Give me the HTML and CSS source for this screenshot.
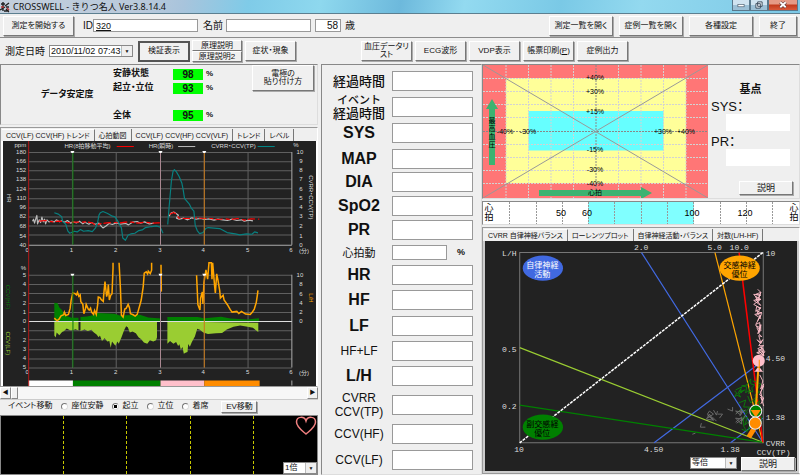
FILE: index.html
```html
<!DOCTYPE html>
<html lang="ja">
<head>
<meta charset="utf-8">
<title>CROSSWELL - きりつ名人 Ver3.8.14.4</title>
<link rel="stylesheet" href="styles.css">
</head>
<body>
<header class="titlebar">
  <svg class="app-icon" viewBox="0 0 10 12" aria-hidden="true"><path d="M1 3h4M3 1v9M0 9l5-3M5 5l4-3M6 6h3M4 10h5M6 8l3 3" stroke="#222" stroke-width="1.4" fill="none"/><path d="M1 6h3M7 7l2 2" stroke="#b33" stroke-width="1.4"/></svg>
  <h1 class="title">CROSSWELL - きりつ名人 Ver3.8.14.4</h1>
  <div class="window-buttons">
    <button class="wb" aria-label="最小化"><svg viewBox="0 0 18 11"><rect x="5.500" y="5" width="7" height="2.500" fill="#fff" stroke="#456" stroke-width=".7"/></svg></button>
    <button class="wb" aria-label="元に戻す"><svg viewBox="0 0 18 11"><path d="M7.500 2h5v5h-5zM5.500 4h5v5h-5z" fill="#eef4fa" stroke="#345" stroke-width="1"/></svg></button>
    <button class="wb close" aria-label="閉じる"><svg viewBox="0 0 28 11"><path d="M11 2.500l6 5.500M17 2.500l-6 5.500" stroke="#533" stroke-width="3.400"/><path d="M11 2.500l6 5.500M17 2.500l-6 5.500" stroke="#fff" stroke-width="2"/></svg></button>
  </div>
</header>

<div class="bar patient">
  <button class="btn wide">測定を開始する</button>
  <label class="lbl id-label" for="pid">ID</label><input class="field id-field" id="pid" value="320">
  <label class="lbl name-label" for="pname">名前</label><input class="field name-field" id="pname">
  <input class="field age-field" id="age" value="58"><label class="lbl age-label" for="age">歳</label>
  <div class="bar-right">
    <button class="btn">測定一覧を開く</button>
    <button class="btn">症例一覧を開く</button>
    <button class="btn">各種設定</button>
    <button class="btn exit">終了</button>
  </div>
</div>

<div class="bar tools">
  <label class="lbl date-label" for="date">測定日時</label>
  <span class="combo date-combo"><select id="date"><option>2010/11/02 07:43</option></select></span>
  <button class="btn tool default">検証表示</button>
  <div class="stack"><button class="btn">原理説明</button><button class="btn">原理説明2</button></div>
  <button class="btn tool">症状・現象</button>
  <div class="tool-group">
    <button class="btn tool">血圧データリスト</button>
    <button class="btn tool">ECG波形</button>
    <button class="btn tool">VDP表示</button>
    <button class="btn tool">帳票印刷(<u>P</u>)</button>
    <button class="btn tool">症例出力</button>
  </div>
</div>

<main class="main">
  <section class="left">
    <div class="panel stability">
      <h2 class="stability-title">データ安定度</h2>
      <dl class="scores">
        <dt>安静状態</dt><dd><b>98</b>%</dd>
        <dt>起立・立位</dt><dd><b>93</b>%</dd>
        <dt class="total">全体</dt><dd class="total"><b>95</b>%</dd>
      </dl>
      <button class="btn attach">電極の<br>貼り付け方</button>
    </div>

    <div class="tabbed">
      <nav class="tabs">
        <button class="tab on">CCV(LF) CCV(HF) トレンド</button><button class="tab">心拍動図</button><button class="tab">CCV(LF) CCV(HF) CCV(VLF)</button><button class="tab">トレンド</button><button class="tab">レベル</button>
      </nav>
      <div class="sheet">
        <svg class="chart" viewBox="4 142 311 243" role="img" aria-label="トレンド">
          <rect x="4" y="142" width="311" height="244" fill="#222"/>
          <path d="M29 153.500H291M29 162.500H291M29 171.500H291M29 180.500H291M29 189.500H291M29 199.500H291M29 208.500H291M29 217.500H291M29 226.500H291M29 235.500H291M73 153V245M116.500 153V245M160.500 153V245M204 153V245M247.500 153V245" class="grid"/>
          <path d="M29 275.500H291M29 284.500H291M29 293.500H291M29 303.500H291M29 312.500H291M29 330.500H291M29 339.500H291M29 349.500H291M29 358.500H291M29 367.500H291M73 275V367M116.500 275V367M160.500 275V367M204 275V367M247.500 275V367" class="grid"/>
          <path d="M29 245.500H291M291 153V245M291 275V367M291 380V385" stroke="#aaa" fill="none"/>
          <g class="ax">
            <text x="27" y="148">ppm</text>
            <text x="27" y="155">180</text><text x="27" y="164">166</text><text x="27" y="173">152</text><text x="27" y="182">138</text><text x="27" y="192">124</text><text x="27" y="201">110</text><text x="27" y="210">96</text><text x="27" y="219">82</text><text x="27" y="228">68</text><text x="27" y="238">54</text><text x="27" y="247">40</text>
            <text x="27" y="270">%</text>
            <text x="27" y="277">5</text><text x="27" y="286">4</text><text x="27" y="296">3</text><text x="27" y="305">2</text><text x="27" y="314">1</text><text x="27" y="323">0</text><text x="27" y="332">1</text><text x="27" y="342">2</text><text x="27" y="351">3</text><text x="27" y="360">4</text><text x="27" y="369">5</text>
          </g>
          <g class="ax mid">
            <text x="295" y="148">%</text>
            <text x="299" y="155">10</text><text x="300" y="164">9</text><text x="300" y="173">8</text><text x="300" y="182">7</text><text x="300" y="192">6</text><text x="300" y="201">5</text><text x="300" y="210">4</text><text x="300" y="219">3</text><text x="300" y="228">2</text><text x="300" y="238">1</text><text x="300" y="247">0</text>
            <text x="299" y="277">10</text><text x="300" y="286">8</text><text x="300" y="296">6</text><text x="300" y="305">4</text><text x="300" y="314">2</text><text x="300" y="323">0</text>
            <text x="28" y="252">0</text><text x="72" y="252">1</text><text x="116" y="252">2</text><text x="160" y="252">3</text><text x="203" y="252">4</text><text x="247" y="252">5</text><text x="290" y="252">6</text><text x="303" y="253">(分)</text>
            <text x="28" y="374">0</text><text x="72" y="374">1</text><text x="116" y="374">2</text><text x="160" y="374">3</text><text x="203" y="374">4</text><text x="247" y="374">5</text><text x="290" y="374">6</text><text x="303" y="375">(分)</text>
            <text transform="translate(8 199) rotate(90)">HR</text>
            <text transform="translate(308 198) rotate(90)">CVRR・CCV(TP)</text>
            <text transform="translate(7 297) rotate(90)" fill="#087808">CCV(HF)</text>
            <text transform="translate(7 343) rotate(90)" fill="#9acd32">CCV(LF)</text>
            <text transform="translate(308 298) rotate(90)" fill="#ffa500">L/H</text>
            <text x="88" y="149">HR(8拍移動平均)</text><text x="161" y="149">HR(瞬時)</text><text x="233" y="149">CVRR・CCV(TP)</text>
          </g>
          <path d="M117 147.500H134" stroke="red"/><path d="M178 147.500H195" stroke="#bbb"/><path d="M257 147.500H274" stroke="#088"/>
          <path d="M29 380H73.500V385.500H29Z" fill="#fff"/><path d="M73.500 380H160.500V385.500H73.500Z" fill="green"/><path d="M160.500 380H204V385.500H160.500Z" fill="pink"/><path d="M204 380H259V385.500H204Z" fill="darkorange"/>
          <g transform="translate(0 125) scale(.33333)" fill="none" stroke-width="3.500" stroke-linejoin="round">
            <path stroke="#bbb" d="M100 290l3-6 3 12 4-14 3-9 2 25 5-12 4 8 4-16 4 14 4-8 3 14 4-12 6 6 8-2 8 2 6-6 10 6 6-3 9 4 8-5 10 8 6-4 12 3 8-5 10 8 6-5 12 6 8-5 10 5 12-3 8 10 4 4 8-5 10-8 10 3 12-5 12 4 16-2 8 4 12-8 14-2 10 5 12-4 14 6 14-2M507 275l6-9 8-3 8 5 6 4-6 9 8 3 14-3 10 5 14-6 12 4 14-2 12 3 14-2 14 4 12-3 14 2 14 2 14-4 14 4 14-2 8 4 14-3 12 2"/>
            <path stroke="red" stroke-dasharray="22 9 12 6" d="M120 290l20-2 20 4 16-2 14 1 16 4 14-2 20 0 20-1 18 3 10 7 14-4 20-3 20-1 20 1 14-2 20 0 20 3 20-3 22 3 16-1 15 0M508 270l12-6 8 4 8 13 14 1 22 0 20-2 20 2 20 0 20 3 20-2 20 2 20-3 20 5 20-4 24 1"/>
            <path stroke="#088080" d="M165 265l12 4 10 8 3 14 9 8 6 20 6 7 14-6 8 2 10-7 9 5 14-2 12 3 10-11 6-16 4-22 4-7 8-4 14 6 14 8 8 2 10 16 9 17 4 30 8 7 8-16 8-3 12-2 12-8 10-2 10-7 18-3 14-2 12 4 8 18M503 300l4-50 7-80 5-29 4-5 6 7 8 14 8 19 4 20 4 26 15 18 6 12 7 8 4 42 6 16 7 9 10-3 8-12 8-3 34 3 22 12 24 4 14 3 20-3 16 1 8-7 10 3"/>
          </g>
          <g transform="translate(0 255) scale(.33333)">
            <path fill="green" d="M165 199V143l10 2 5 12 8 8 7 15 10 4 12 4h20v11ZM243 199v-13l20-2 20-4 10-6 52 2 15 5 60-2 25 8 38 3v9ZM502 199v-13l90 0 20 3 50-4 28 5 50 3 35-4v10Z"/>
            <path fill="#9acd32" d="M165 199v42l4 6 3-15 8 8 8-10 6-3 8-7 10 5 8 0 8-3 9 4v-27ZM243 199v28l12-4 10 4 10-3 8 8 8 6 6 8 4-5 6 16 8-8 8 10 6-2 4 20 4-18 10 12 6-12 4 6 8-18 8-22 6-12 5 3 6 16 8-3 10 5 8 12 8 6 8 10 10 3 8-10 10 4 8-4 3-8V199ZM502 199v66l8-8 10 8 8-5 6 12 4-5 4 16 5-8 4 20 5-3 6-2 2-24 5 8 6-14 9-16 7-23 8 3 10 8 14 4 24-2 18-1 14-10 20-8 20-4 22 4 16 3 16 12v-27Z"/>
            <path d="M88 199H873" stroke="#ddd" stroke-width="3"/>
            <path fill="none" stroke="orange" stroke-width="4.500" d="M165 189l8 8 6-5 6-10 8-3 2-8 4 10 8-3 5-18 3-24 5-22 7 2 4 4 3-8 4 12 4-4 2 20 6 8 3 28 5-16 2-12 6 14 3 3 4-6 3 12 6 7 3-12 5 12 4-28 2-24 5 2 4 6 6 5 1-17 4-42 5 45 3-12 2-24 3 46 4-14 4-5 3-76V24M358 24l4 76 3 80 5 6 5-24 4-2 6-12 4 10 3 18 8 3 6 4 6-5 8-28 4-15 6-40 3-40 6-4 4 6 2-8 6 7 4-10V24M483 30l1 80M589 61l4 88 6 16 2-36 5-18 2 36 3-64 6-38 5 28 4-49 7 0 2 49 2-49 6 72 2 18 4-57 4 20 5 30 2 22 8-8 3 14 10 14 8 14 6 8 14-2 6 6 8-6 12 8 14 1 7-8 5-8 6-20 3-20 2-16"/>
          </g>
          <path d="M29.500 142V386" stroke="#b01818"/>
          <path d="M73.500 153V245M73.500 275V367" stroke="#0a7a0a"/><path d="M160.500 153V245M160.500 275V367" stroke="#a98790"/><path d="M204 153V245M204 275V367" stroke="#c87818"/>
          <path d="M71 152h4l-1 2h-2zM158.500 152h4l-1 2h-2zM202 152h4l-1 2h-2zM71 274h4l-1 2h-2zM158.500 274h4l-1 2h-2zM202 274h4l-1 2h-2z" fill="#fff"/>
        </svg>
      </div>
    </div>

    <div class="scroll"><button class="arrow" aria-label="左へ">◀</button><button class="thumb" aria-label="つまみ"></button><button class="arrow end" aria-label="右へ">▶</button></div>

    <form class="events">
      <span>イベント移動</span>
      <label><input type="radio" name="ev">座位安静</label>
      <label><input type="radio" name="ev" checked>起立</label>
      <label><input type="radio" name="ev">立位</label>
      <label><input type="radio" name="ev">着席</label>
      <button type="button" class="btn ev">EV移動</button>
    </form>

    <div class="ecg">
      <i></i><i></i><i></i><i></i>
      <div class="ecg-side">
        <svg class="heart" viewBox="0 0 22 20" aria-hidden="true"><path d="M11 18C7 14.500 1.500 11 1.500 6C1.500 0 9.500 0 11 5C12.500 0 20.500 0 20.500 6C20.500 11 15 14.500 11 18Z" fill="none" stroke="#f08080" stroke-width="1.500"/></svg>
        <span class="combo zoom-combo"><select aria-label="倍率"><option>1倍</option></select></span>
      </div>
    </div>
  </section>

  <section class="panel readings">
    <label for="r1" class="jp">経過時間</label><input id="r1">
    <label for="r2" class="jp"><span>イベント</span>経過時間</label><input id="r2">
    <label for="r3">SYS</label><input id="r3">
    <label for="r4">MAP</label><input id="r4">
    <label for="r5">DIA</label><input id="r5">
    <label for="r6">SpO2</label><input id="r6">
    <label for="r7">PR</label><input id="r7">
    <label for="r8" class="beat">心拍動</label><div class="pct"><input id="r8"><b>%</b></div>
    <label for="r9">HR</label><input id="r9">
    <label for="r10">HF</label><input id="r10">
    <label for="r11">LF</label><input id="r11">
    <label for="r12" class="thin">HF+LF</label><input id="r12">
    <label for="r13">L/H</label><input id="r13">
    <label for="r14" class="thin">CVRR<br>CCV(TP)</label><input id="r14">
    <label for="r15" class="thin">CCV(HF)</label><input id="r15">
    <label for="r16" class="thin">CCV(LF)</label><input id="r16">
  </section>

  <section class="right">
    <div class="panel map">
      <svg class="zone" viewBox="483 65 225 133" role="img" aria-label="最高血圧と心拍">
        <rect x="483" y="65" width="225" height="133" fill="#ff7676"/>
        <rect x="506" y="78" width="180" height="105" fill="#ffff99"/>
        <rect x="528.500" y="111" width="135" height="39.500" fill="#66ffff"/>
        <path d="M506 65V198M528.500 65V198M551 65V198M573.500 65V198M618.500 65V198M641 65V198M663.500 65V198M686 65V198M483 78.500H708M483 91.500H708M483 104.500H708M483 117.500H708M483 144.500H708M483 157.500H708M483 170.500H708M483 183.500H708" stroke="#d3d3d3" stroke-dasharray="2 1" fill="none"/>
        <path d="M596 65V198M483 131.500H708" stroke="#888" stroke-dasharray="2 1"/>
        <path d="M483 65L708 198M708 65L483 198" stroke="#999"/>
        <path d="M489 165V109H486L492 99L498 109H495V165ZM539 190H641V187L652 193L641 199V196H539Z" fill="#3cb371"/>
        <g class="zt"><text x="595" y="80">+40%</text><text x="595" y="94">+30%</text><text x="595" y="114">+15%</text><text x="595" y="152">-15%</text><text x="595" y="172">-30%</text><text x="595" y="186">-40%</text><text x="505" y="134">-40%</text><text x="528" y="134">-30%</text><text x="663" y="134">+30%</text><text x="686" y="134">+40%</text><text x="595" y="195">心拍</text>
        <text x="492" y="123">最</text><text x="492" y="131">高</text><text x="492" y="139">血</text><text x="492" y="147">圧</text></g>
      </svg>
      <div class="base">
        <h2>基点</h2>
        <label for="bs">SYS：</label><input id="bs">
        <label for="bp">PR：</label><input id="bp">
        <button class="btn explain">説明</button>
      </div>
    </div>

    <div class="panel strip">
      <svg viewBox="483 202 316 22" role="img" aria-label="心拍">
        <rect x="483" y="202" width="316" height="22" fill="#fff"/><rect x="588" y="202" width="106" height="22" fill="#80ffff"/>
        <path d="M509.500 202V224M536.500 202V224M562.500 202V224M588.500 202V224M614.500 202V224M641.500 202V224M667.500 202V224M693.500 202V224M720.500 202V224M746.500 202V224M772.500 202V224" stroke="#999" stroke-dasharray="2 1"/>
        <g class="st"><text x="561" y="216">50</text><text x="587" y="216">60</text><text x="692" y="216">100</text><text x="745" y="216">120</text><text x="489" y="211">心</text><text x="489" y="220">拍</text><text x="794" y="211">心</text><text x="794" y="220">拍</text></g>
      </svg>
    </div>

    <div class="tabbed">
      <nav class="tabs">
        <button class="tab on">CVRR 自律神経バランス</button><button class="tab">ローレンツプロット</button><button class="tab">自律神経活動・バランス</button><button class="tab">対数(L/H-HF)</button>
      </nav>
      <div class="sheet dark">
        <svg class="chart" viewBox="486 241 310 215" role="img" aria-label="自律神経バランス">
          <rect x="486" y="241" width="310" height="215" fill="#222"/>
          <path d="M520.500 252.500H762.500V441.500H520.500Z" fill="none" stroke="#777"/>
          <g fill="none" stroke-width="1.200">
            <path d="M641.500 252.500L762 441M654 441.500L762 360M730 441.500L762 417" stroke="#4169e1"/>
            <path d="M520.500 347L762 441" stroke="#9acd32"/><path d="M520.500 404L762 441" stroke="green"/>
            <path d="M714.500 252.500L762 441" stroke="orange"/><path d="M738.500 252.500L762 441" stroke="red" stroke-width="1.500"/>
            <path d="M762 252.500L520.500 441.500" stroke="#fff" stroke-dasharray="3 1" stroke-width="1.500"/>
          </g>
          <g fill="none" stroke-width=".9">
            <path stroke="pink" d="M757 289l3 3-5 2 5 1-7-1 4 5 3-7-3 10-2-6 5 3-7 1 4 3 3 2-5-6 5 0-7 5 7 4-4-2-1 5 5-4-4 7 5-2-7 2 6 4-4-8 5 3-4 7 3-5-5 9 4-2 0 5-4-2 5 5 0-6-3 9 3-3M756 327l2 4 2-6-2 8 3 3-3-1 2 7-4-3M757 340l3 3 2-4-4 6 5 0-6 3 5 3-6 1 7 3-3-9 4 5-5 7M757 351l5-4 1 8-5-5 4 4M759 374l3 6-2 8 3-5-4 11 4 3-3 6M763 385l-3 6 2 9-2-4 3 9"/>
            <path stroke="#0a7f0a" d="M746 384l4-6 0 5 4 1-3 3 1 4-5-1-2 2 1-6-5-1 6-1M735 389l6-3-2 5 5-2-6 4 2 3-4-2-2 2 2-4-2-2M737 393l3-5 1 4M749 386l-1 7M752 380l8 3-4 6 3 2-5 3 3 4-4 2 5 3M738 402l7-3-2 7 6 0-4 5-4-3-5 4M747 395l3 7 6-7-2 8 5-3M747 411l-6 7 6-2-3 8 6-5-2 10M739 423l4-5 0 7 3 5-5-2M758 400l2 8-3 6 4 2-2 9M746 431l4-8"/>
            <path stroke="#707070" d="M700 426l5 0M701 422l-1 4M692 433l3-1M707 417l6-4-4-3-2 3 6 6-7-1 3-5 4 6-6-5M713 409l3 5 1-4M717 413l5 0-3 4M712 416l4 4M727 408l5 2 0-4M735 413l6-5-1 6-5-4 7 1-3 4M735 421l6-5 0 7-6-6 7 1-6 4M739 412l6-3M741 420l4-6"/>
          </g>
          <path d="M758 360L755 410" stroke="orange" stroke-width="2"/>
          <circle cx="758" cy="360" r="6" fill="pink"/><path d="M753 371c3-1 2-4 5-4s2 3 5 4z" fill="pink"/><path d="M758.500 359V370" stroke="darkorange"/>
          <circle cx="755" cy="410" r="6" fill="green" stroke="#eee"/><path d="M750 409h10l-4 6h-2z" fill="darkorange"/>
          <path d="M753 428L748 436" stroke="darkorange" stroke-width="5"/><circle cx="754.500" cy="422" r="6" fill="darkorange" stroke="#eee"/>
          <ellipse cx="543.500" cy="268" rx="20" ry="12.500" fill="#4169e1"/><ellipse cx="739" cy="268" rx="20" ry="12.500" fill="orange"/><ellipse cx="543.500" cy="426" rx="20" ry="12.500" fill="green"/>
          <g class="bt"><text x="543" y="268" fill="#fff">自律神経</text><text x="543" y="277" fill="#fff">活動</text><text x="739" y="268" fill="#000">交感神経</text><text x="739" y="277" fill="#000">優位</text><text x="543" y="426" fill="#000">副交感経</text><text x="543" y="435" fill="#000">優位</text></g>
          <g class="bn"><text x="503" y="256">L/H</text><text x="634" y="250">2.0</text><text x="707" y="250">5.0</text><text x="729" y="250">10.0</text><text x="765" y="256">10</text><text x="503" y="351">0.5</text><text x="503" y="408">0.2</text><text x="515" y="451">10</text><text x="644" y="451">4.50</text><text x="720" y="451">1.38</text><text x="765" y="360">4.50</text><text x="765" y="419">1.38</text><text x="765" y="445">CVRR</text><text x="756" y="454">CCV(TP)</text></g>
        </svg>
        <div class="sheet-foot">
          <span class="combo scale-combo"><select aria-label="表示倍率"><option>等倍</option></select></span>
          <button class="btn explain">説明</button>
        </div>
      </div>
    </div>
  </section>
</main>
</body>
</html>
```
FILE: styles.css
```css
* { box-sizing: border-box; }

body {
  margin: 0;
  min-height: 100vh;
  display: flex;
  flex-direction: column;
  background: #efefef;
  color: #111;
  font: 8px/1.1 "Liberation Sans", "Noto Sans CJK JP", sans-serif;
  font-feature-settings: "palt";
}

h1, h2, dl, dd { margin: 0; font-size: inherit; }
button, input, select { font: inherit; color: inherit; font-feature-settings: inherit; margin: 0; }
input { min-width: 0; }
svg { display: block; }

/* title bar */
.titlebar {
  display: flex;
  align-items: center;
  height: 14px;
  padding-right: 2px;
  border-bottom: 1px solid #5c7f90;
  background: linear-gradient(100deg, #c3cfdc 0%, #b9c9db 18%, #a8c4dc 23%, #7fcbe8 31%, #8ed8ee 40%, #6db9dc 50%, #93daf0 58%, #7ac9e6 70%, #93d9ef 80%, #7cc8e6 100%);
}
.app-icon { width: 10px; height: 12px; }
.title { margin-left: 3px; font: 9px/13px "Noto Sans", "Noto Sans CJK JP", sans-serif; }
.window-buttons { display: flex; align-self: flex-start; margin-left: auto; }
.wb {
  width: 18px; height: 11px; padding: 0;
  border: 1px solid #59788c; border-top: 0;
  background: linear-gradient(#cfe3f0 45%, #9cc0d6 50%);
}
.wb.close { width: 30px; background: linear-gradient(#e59a86 40%, #c23a1c 50%, #d8593a); }
.wb svg { width: 100%; height: 10px; }

/* toolbars */
.bar { display: flex; align-items: center; height: 24px; padding: 0 3px; border-bottom: 1px solid #8c8c8c; }
.tools { height: 26px; border-bottom: 0; }
.btn {
  width: 64px; height: 20px; padding: 0; line-height: 8px; font-weight: normal;
  border: 1px solid; border-color: #fff #777 #777 #fff;
  box-shadow: 1px 1px 0 #aaa;
  background: #f0f0f0;
}
.wide { width: 71px; }
.exit { width: 38px; }
.lbl { font-size: 10px; white-space: nowrap; }
.field { height: 13px; padding: 0 2px; border: 1px solid #999; background: #fff; font-size: 9px; }
.id-label { margin-left: 9px; }
.id-field { width: 105px; text-decoration: underline; }
.name-label { margin: 0 3px 0 5px; }
.name-field { width: 85px; }
.age-field { width: 26px; margin: 0 4px; text-align: right; font-size: 10px; }
.bar-right { display: flex; gap: 6px; margin-left: auto; }

.date-label { margin: 0 4px 0 2px; }
.combo { position: relative; display: inline-flex; background: #fff; border: 1px solid #888; height: 12px; }
.combo select { width: 100%; padding: 0 1px; border: 0; background: none; appearance: none; font-size: 8px; line-height: 10px; }
.combo::after {
  content: "▼"; position: absolute; right: 0; top: 0; bottom: 0; width: 10px;
  background: #eee; border-left: 1px solid #bbb; font-size: 5px; line-height: 10px; text-align: center;
  pointer-events: none;
}
.date-combo { width: 84px; margin-right: 6px; }
.date-combo select { font-size: 9px; }
.tool { width: 51px; margin-right: 3px; }
.default { border-color: #555; box-shadow: 0 0 0 1px #555; width: 50px; height: 19px; }
.stack { margin-right: 3px; }
.stack .btn { display: block; width: 50px; height: 11px; }
.tool-group { display: flex; margin-left: 62px; }

/* three columns */
.main {
  flex: 1;
  display: grid;
  grid-template-columns: minmax(0, 319fr) minmax(0, 163fr) minmax(0, 318fr);
}
.panel { border: 1px solid; border-color: #888 #ddd #ddd #888; }
.left { display: flex; flex-direction: column; padding-right: 1px; }

.stability { display: flex; height: 61px; padding-left: 40px; font-weight: bold; }
.stability-title { align-self: center; width: 72px; font-size: 9px; }
.scores { display: grid; grid-template-columns: 60px 1fr; grid-template-rows: 14px 14px 28px; align-items: center; font-size: 9px; padding-top: 2px; }
.scores dd { display: flex; align-items: center; font-size: 8px; }
.scores b { width: 30px; height: 11px; margin-right: 3px; background: #0f0; font-size: 10px; line-height: 11px; text-align: center; }
.scores .total { align-self: end; padding-bottom: 2px; }
.attach { margin-left: auto; margin-right: 3px; width: 62px; height: 26px; }

/* tabs */
.tabbed { margin-top: 2px; border: 1px solid; border-color: #999 #fff #999 #999; }
.tabs { display: flex; height: 13px; padding-left: 1px; }
.tab {
  height: 12px; margin-top: 1px; padding: 0 4px; white-space: nowrap;
  border: 0; border-right: 1px solid #777; background: none; font-size: 7px; line-height: 11px;
}
.tab.on { border-top: 1px solid #fff; }
.sheet { padding: 0 1px 0 2px; background: #fff; }
.chart { width: 100%; height: auto; }
svg text { font-family: "Liberation Sans", "Noto Sans CJK JP", sans-serif; }
.grid { fill: none; stroke: #606060; }
.ax { font-size: 6px; fill: #ddd; text-anchor: end; }
.mid { text-anchor: middle; }

.scroll { display: flex; height: 13px; background: #f7f7f7; border-bottom: 1px solid #ccc; }
.scroll button { padding: 0; border: 1px solid; border-color: #fff #888 #888 #fff; background: #f0f0f0; }
.arrow { width: 11px; font-size: 6px; }
.thumb { width: 7px; }
.end { margin-left: auto; }

.events { display: flex; align-items: center; height: 14px; padding-left: 8px; gap: 9px; }
.events label { display: flex; align-items: center; gap: 3px; }
.events input {
  appearance: none; width: 7px; height: 7px; border-radius: 50%;
  border: 1px solid; border-color: #777 #ddd #ddd #777; background: #fff;
}
.events input:checked { background: radial-gradient(#000 40%, #fff 50%); }
.ev { width: 36px; height: 12px; margin-left: 4px; }

.ecg { flex: 1; display: grid; grid-template-columns: repeat(5, 1fr); margin-top: 1px; background: #000; border: 1px solid #888; }
.ecg > i { border-right: 1px dashed #c8c800; }
.ecg-side { display: flex; flex-direction: column; justify-content: space-between; align-items: flex-end; }
.heart { width: 22px; height: 20px; }
.zoom-combo { width: 34px; }

/* readings */
.readings {
  display: grid;
  margin: 0 0 0 2px;
  grid-template-columns: 1fr 81px;
  grid-template-rows: 26px 25px 28px 23px 24px 24px 24px 21px 24px 26px 26px 24px 25px 33px 26px 26px;
  align-items: center;
  padding: 3px 8px 0 4px;
}
.readings label { text-align: center; font-weight: bold; font-size: 16px; line-height: 20px; }
.readings .jp { font-size: 13px; line-height: 13px; font-weight: 500; font-feature-settings: normal; }
.readings .jp span { display: block; font-size: 11px; }
.readings .thin { font-size: 12px; line-height: 14px; font-weight: normal; }
.readings .beat { font-size: 11px; font-weight: normal; }
.readings input { width: 100%; height: 20px; border: 1px solid #999; background: #fff; }
.pct { display: flex; align-items: center; gap: 10px; font-size: 9px; }
.readings .pct input { width: 55px; height: 15px; }

/* right column */
.map { display: grid; grid-template-columns: minmax(0, 225fr) minmax(0, 91fr); }
.zone { width: 100%; }
.zt { font-size: 7px; text-anchor: middle; }
.base { display: flex; flex-direction: column; align-items: flex-end; padding: 17px 9px 3px 3px; }
.base h2 { align-self: center; font-size: 11px; line-height: 14px; }
.base label { align-self: flex-start; margin-top: 4px; font-size: 13px; line-height: 14px; }
.base input { width: 64px; height: 17px; border: 0; background: #fff; }
.base .explain { margin-top: auto; margin-right: -3px; }
.explain { width: 54px; height: 14px; font-size: 9px; }
.strip { margin-top: 2px; }
.strip svg { width: 100%; }
.st { font-size: 9px; text-anchor: middle; }
.dark { background: #222; padding: 0; border: 2px solid #ccc; border-top: 0; }
svg .bt text { font-size: 8px; text-anchor: middle; }
svg .bn text { font-family: "Liberation Mono", monospace; font-size: 8px; fill: #ddd; }
.sheet-foot { display: flex; justify-content: flex-end; gap: 4px; padding-right: 2px; }
.scale-combo { width: 47px; }
```
